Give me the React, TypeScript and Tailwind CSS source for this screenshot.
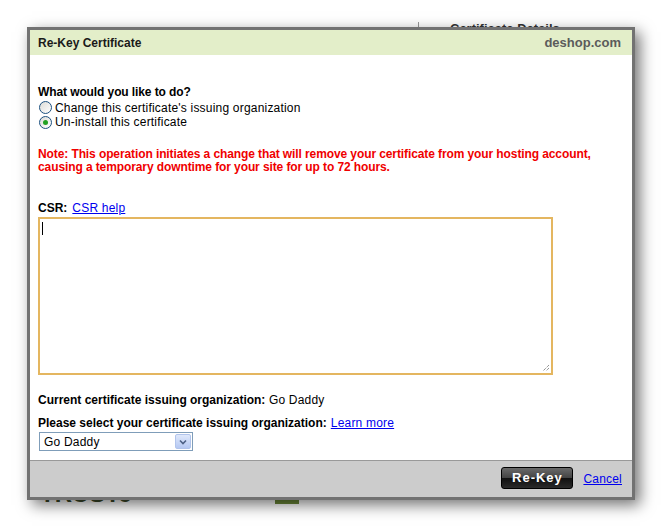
import React from "react";

function Radio({ checked }: { checked?: boolean }) {
  return (
    <span className="relative inline-flex h-[13px] w-[13px] shrink-0 items-center justify-center rounded-full border border-[#1c5180] bg-gradient-to-br from-[#dcdcd7] to-white">
      {checked && <span className="h-[5px] w-[5px] rounded-full bg-[#21a121]" />}
    </span>
  );
}

export default function App() {
  return (
    <div className="relative h-[528px] w-[661px] overflow-hidden bg-white text-[12px] tracking-[0.2px] text-black" style={{ fontFamily: '"Liberation Sans", Arial, sans-serif' }}>
      {/* page behind the dialog */}
      <div className="absolute left-[450px] top-[19px] text-[13px] font-bold tracking-normal text-[#333]">Certificate Details</div>
      <div className="absolute left-[418px] top-[22px] h-[8px] w-px bg-[#999]" />
      <div className="absolute left-[40px] top-[476px] text-[24px] font-bold tracking-normal text-[#3c4a2a]">TRUSTe</div>
      <div className="absolute left-[275px] top-[494px] h-[10px] w-[24px] bg-[#6d8a3a]" />

      <div className="relative ml-[27px] mt-[27px] flex h-[473px] w-[608px] flex-col border-[3px] border-[#727272] shadow-[5px_5px_14px_rgba(0,0,0,0.55)]">
        <div className="flex h-[25px] shrink-0 items-center justify-between bg-[#e3eec9] pl-[8px] pr-[11px] tracking-normal">
          <span className="font-bold text-[#1a1a1a]">Re-Key Certificate</span>
          <span className="text-[13px] font-bold text-[#5b5b5b]">deshop.com</span>
        </div>

        <div className="flex flex-1 flex-col bg-white pl-[8px] pt-[29px]">
          <div className="font-bold leading-[16px] tracking-[-0.1px]">What would you like to do?</div>
          <label className="flex h-[15px] items-center gap-[3px] pl-[1px]">
            <Radio />
            <span>Change this certificate's issuing organization</span>
          </label>
          <label className="flex h-[14px] items-center gap-[3px] pl-[1px]">
            <Radio checked />
            <span>Un-install this certificate</span>
          </label>

          <div className="mt-[19px] font-bold leading-[12.5px] tracking-[-0.1px] text-[#f00000]">
            Note: This operation initiates a change that will remove your certificate from your hosting account,
            <br />
            causing a temporary downtime for your site for up to 72 hours.
          </div>

          <div className="mt-[28px] flex h-[14px] items-center gap-[5px]">
            <span className="font-bold tracking-normal">CSR:</span>
            <a className="text-[#0000ee] underline">CSR help</a>
          </div>
          <div className="relative mt-[2px] h-[158px] w-[515px] border-2 border-[#e4b660] bg-white">
            <span className="absolute left-[2px] top-[3px] h-[13px] w-px bg-black" />
            <svg className="absolute bottom-[1px] right-[1px]" width="9" height="9" viewBox="0 0 9 9">
              <path d="M8 2 L2 8 M8 5 L5 8" stroke="#666" strokeWidth="1" strokeDasharray="1 1" />
            </svg>
          </div>

          <div className="mt-[18px] leading-[14px]">
            <span className="font-bold tracking-normal">Current certificate issuing organization:</span> Go Daddy
          </div>
          <div className="mt-[9px] flex h-[14px] items-center gap-[4px]">
            <span className="font-bold tracking-normal">Please select your certificate issuing organization:</span>
            <a className="text-[#0000ee] underline">Learn more</a>
          </div>
          <div className="ml-[1px] mt-[2px] flex h-[19px] w-[154px] items-center border border-[#7f9db9] bg-white pl-[4px] pr-[1px]">
            <span className="flex-1">Go Daddy</span>
            <span className="flex h-[15px] w-[16px] items-center justify-center rounded-[2px] border border-[#b1c4ec] bg-gradient-to-b from-[#dfe8fb] to-[#b5c8f2]">
              <svg width="8" height="6" viewBox="0 0 8 6">
                <path d="M1 1.5 L4 4.5 L7 1.5" stroke="#4d6185" strokeWidth="1.6" fill="none" />
              </svg>
            </span>
          </div>
        </div>

        <div className="flex h-[37px] shrink-0 items-center justify-end gap-[10px] border-t border-[#999] bg-[#cccccc] pr-[10px]">
          <button className="mt-[-3px] flex h-[22px] w-[72px] items-center justify-center rounded-[3px] border border-black bg-[linear-gradient(#6a6a6a_0%,#444_48%,#111_52%,#2a2a2a_100%)] text-[13px] font-bold tracking-[1px] text-white">
            Re-Key
          </button>
          <a className="mt-[-1px] text-[#0000ee] underline">Cancel</a>
        </div>
      </div>
    </div>
  );
}
